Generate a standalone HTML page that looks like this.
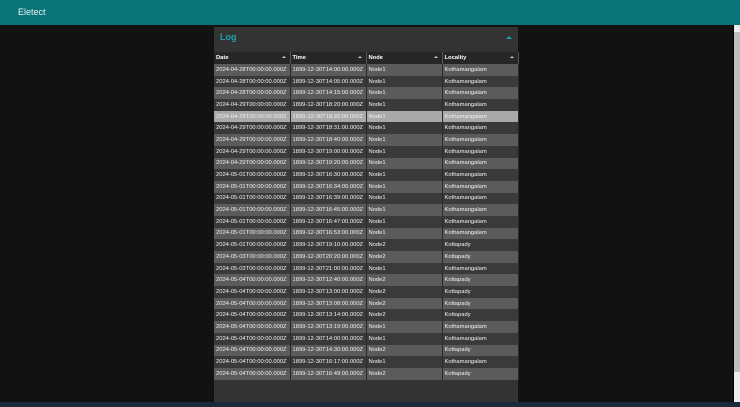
<!DOCTYPE html>
<html><head><meta charset="utf-8"><style>
*{margin:0;padding:0;box-sizing:border-box}
body{width:740px;height:407px;background:#121212;font-family:"Liberation Sans",sans-serif;overflow:hidden;position:relative}
.hdr{position:absolute;left:0;top:0;width:740px;height:25px;background:#0b7478;color:#e8f4f4;font-size:9px;padding:7px 0 0 18px}
.sb{position:absolute;left:733px;top:25px;width:7px;height:377px;background:#ececec;border-left:1px solid #000}
.thumb{position:absolute;left:734px;top:32px;width:6px;height:340px;background:#bfbfbf}
.task{position:absolute;left:0;top:402px;width:740px;height:5px;background:#1c2a38}
.panel{position:absolute;left:214px;top:27px;width:304px;height:375px;background:#333}
.title{position:absolute;left:6px;top:5px;color:#1aa3ad;font-size:9px;font-weight:bold}
.car{position:absolute;right:6px;top:9px;width:0;height:0;border-left:3px solid transparent;border-right:3px solid transparent;border-bottom:3px solid #1aa3ad}
table{position:absolute;left:0;top:25px;width:304px;border-collapse:collapse;table-layout:fixed}
th{height:12px;color:#fff;font-size:5.8px;text-align:left;padding-left:2px;background:#262626;border-right:1px solid #555;position:relative}
th:after{content:"";position:absolute;right:4px;top:4px;border-left:2px solid transparent;border-right:2px solid transparent;border-bottom:2px solid #ccc}
td{height:11.7px;color:#f2f2f2;font-size:5.8px;padding-left:2px;white-space:nowrap;overflow:hidden;border-right:1px solid #2a2a2a}
tr:nth-child(odd) td{background:#5b5b5b}
tr:nth-child(even) td{background:#3a3a3a}
tr.sel td{background:#a9a9a9}
</style></head><body>
<div class="hdr">Eletect</div>
<div class="panel"><div class="title">Log</div><div class="car"></div>
<table><colgroup><col style="width:76px"><col style="width:76px"><col style="width:76px"><col style="width:76px"></colgroup>
<thead><tr><th>Date</th><th>Time</th><th>Node</th><th>Locality</th></tr></thead><tbody>
<tr><td>2024-04-28T00:00:00.000Z</td><td>1899-12-30T14:00:00.000Z</td><td>Node1</td><td>Kothamangalam</td></tr>
<tr><td>2024-04-28T00:00:00.000Z</td><td>1899-12-30T14:05:00.000Z</td><td>Node1</td><td>Kothamangalam</td></tr>
<tr><td>2024-04-28T00:00:00.000Z</td><td>1899-12-30T14:15:00.000Z</td><td>Node1</td><td>Kothamangalam</td></tr>
<tr><td>2024-04-29T00:00:00.000Z</td><td>1899-12-30T18:20:00.000Z</td><td>Node1</td><td>Kothamangalam</td></tr>
<tr class="sel"><td>2024-04-29T00:00:00.000Z</td><td>1899-12-30T18:26:00.000Z</td><td>Node1</td><td>Kothamangalam</td></tr>
<tr><td>2024-04-29T00:00:00.000Z</td><td>1899-12-30T18:31:00.000Z</td><td>Node1</td><td>Kothamangalam</td></tr>
<tr><td>2024-04-29T00:00:00.000Z</td><td>1899-12-30T18:40:00.000Z</td><td>Node1</td><td>Kothamangalam</td></tr>
<tr><td>2024-04-29T00:00:00.000Z</td><td>1899-12-30T19:00:00.000Z</td><td>Node1</td><td>Kothamangalam</td></tr>
<tr><td>2024-04-29T00:00:00.000Z</td><td>1899-12-30T19:20:00.000Z</td><td>Node1</td><td>Kothamangalam</td></tr>
<tr><td>2024-05-01T00:00:00.000Z</td><td>1899-12-30T16:30:00.000Z</td><td>Node1</td><td>Kothamangalam</td></tr>
<tr><td>2024-05-01T00:00:00.000Z</td><td>1899-12-30T16:34:00.000Z</td><td>Node1</td><td>Kothamangalam</td></tr>
<tr><td>2024-05-01T00:00:00.000Z</td><td>1899-12-30T16:39:00.000Z</td><td>Node1</td><td>Kothamangalam</td></tr>
<tr><td>2024-05-01T00:00:00.000Z</td><td>1899-12-30T16:45:00.000Z</td><td>Node1</td><td>Kothamangalam</td></tr>
<tr><td>2024-05-01T00:00:00.000Z</td><td>1899-12-30T16:47:00.000Z</td><td>Node1</td><td>Kothamangalam</td></tr>
<tr><td>2024-05-01T00:00:00.000Z</td><td>1899-12-30T16:53:00.000Z</td><td>Node1</td><td>Kothamangalam</td></tr>
<tr><td>2024-05-01T00:00:00.000Z</td><td>1899-12-30T19:10:00.000Z</td><td>Node2</td><td>Kottapady</td></tr>
<tr><td>2024-05-03T00:00:00.000Z</td><td>1899-12-30T20:20:00.000Z</td><td>Node2</td><td>Kottapady</td></tr>
<tr><td>2024-05-03T00:00:00.000Z</td><td>1899-12-30T21:00:00.000Z</td><td>Node1</td><td>Kothamangalam</td></tr>
<tr><td>2024-05-04T00:00:00.000Z</td><td>1899-12-30T12:40:00.000Z</td><td>Node2</td><td>Kottapady</td></tr>
<tr><td>2024-05-04T00:00:00.000Z</td><td>1899-12-30T13:00:00.000Z</td><td>Node2</td><td>Kottapady</td></tr>
<tr><td>2024-05-04T00:00:00.000Z</td><td>1899-12-30T13:08:00.000Z</td><td>Node2</td><td>Kottapady</td></tr>
<tr><td>2024-05-04T00:00:00.000Z</td><td>1899-12-30T13:14:00.000Z</td><td>Node2</td><td>Kottapady</td></tr>
<tr><td>2024-05-04T00:00:00.000Z</td><td>1899-12-30T13:19:00.000Z</td><td>Node1</td><td>Kothamangalam</td></tr>
<tr><td>2024-05-04T00:00:00.000Z</td><td>1899-12-30T14:00:00.000Z</td><td>Node1</td><td>Kothamangalam</td></tr>
<tr><td>2024-05-04T00:00:00.000Z</td><td>1899-12-30T14:30:00.000Z</td><td>Node2</td><td>Kottapady</td></tr>
<tr><td>2024-05-04T00:00:00.000Z</td><td>1899-12-30T16:17:00.000Z</td><td>Node1</td><td>Kothamangalam</td></tr>
<tr><td>2024-05-04T00:00:00.000Z</td><td>1899-12-30T16:49:00.000Z</td><td>Node2</td><td>Kottapady</td></tr>
</tbody></table></div>
<div class="sb"></div>
<div class="thumb"></div>
<div class="task"></div>
</body></html>
